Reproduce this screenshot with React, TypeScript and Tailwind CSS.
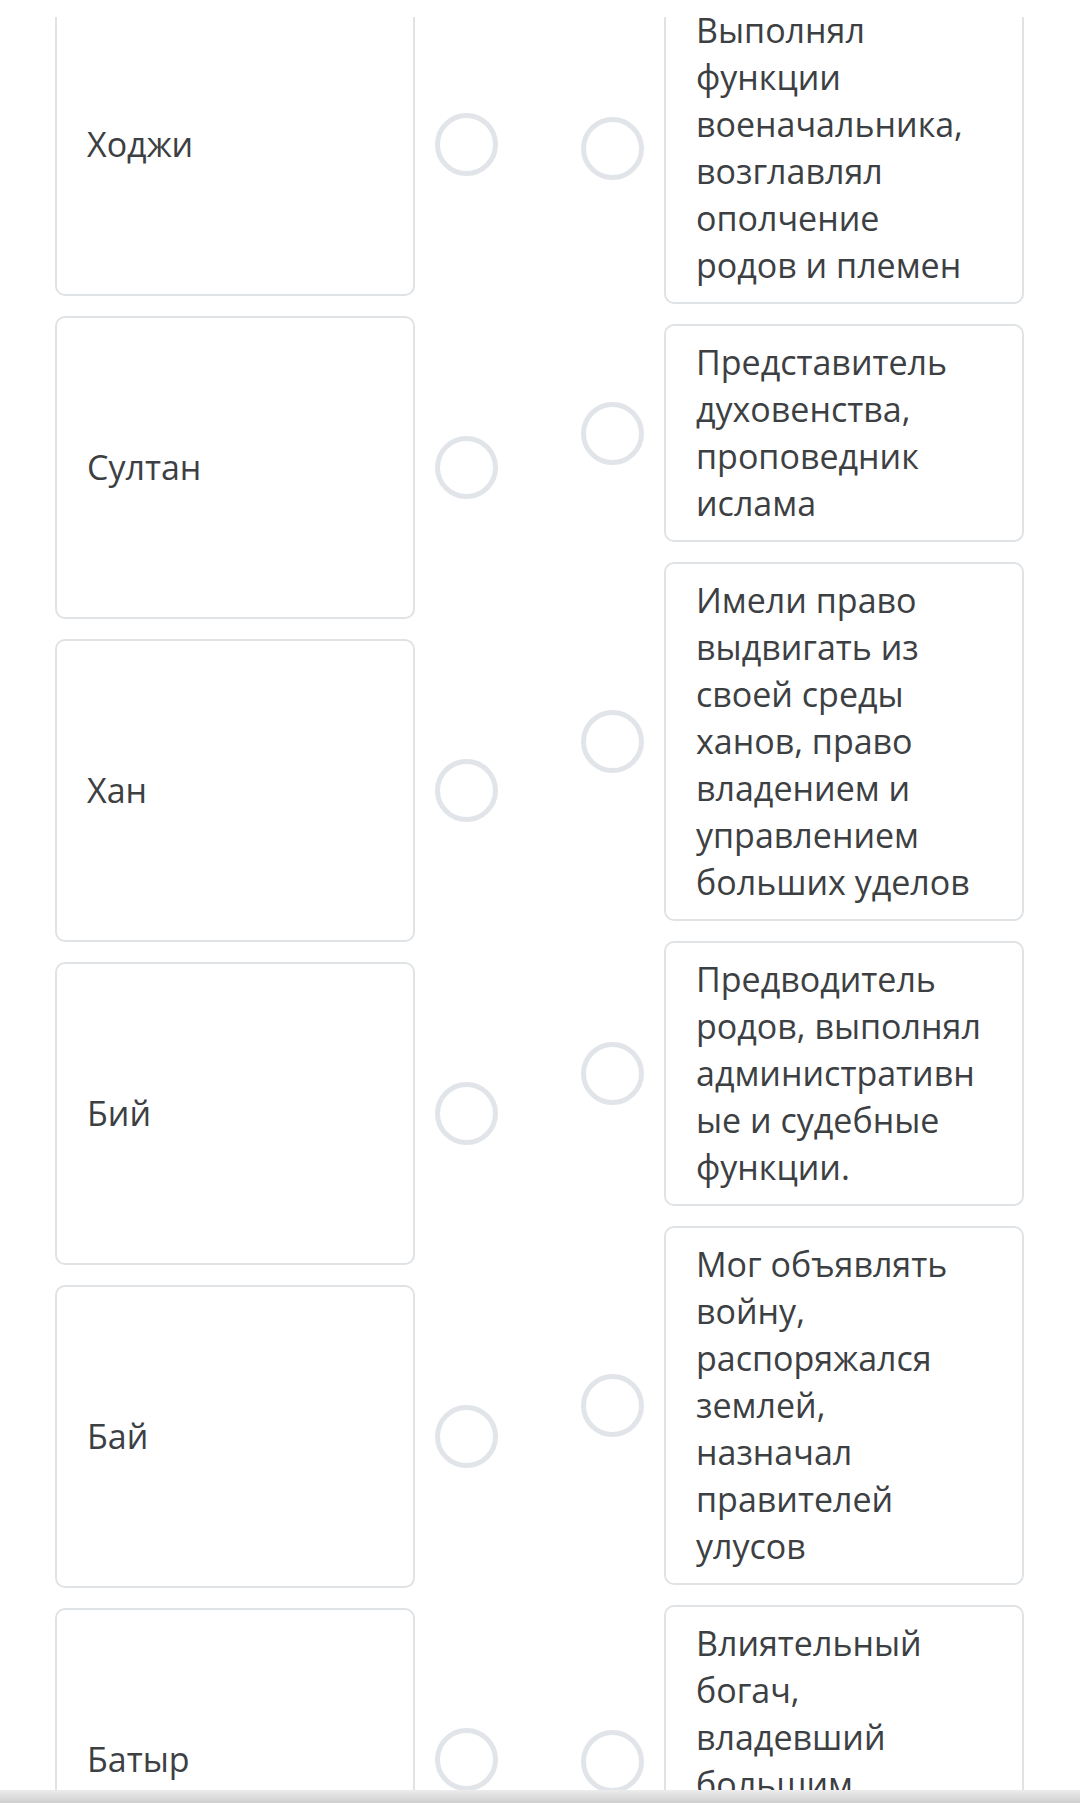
import React from 'react';

const leftItems = ['Ходжи', 'Султан', 'Хан', 'Бий', 'Бай', 'Батыр'];

const rightItems = [
  'Выполнял функции военачальника, возглавлял ополчение родов и племен',
  'Представитель духовенства, проповедник ислама',
  'Имели право выдвигать из своей среды ханов, право владением и управлением больших уделов',
  'Предводитель родов, выполнял административные и судебные функции.',
  'Мог объявлять войну, распоряжался землей, назначал правителей улусов',
  'Влиятельный богач, владевший большим\nскотом и пастбищами',
];

const Circle = () => (
  <div className="w-[63px] h-[63px] shrink-0 rounded-full border-[5px] border-[#e1e4e8] bg-white" />
);

const App = () => {
  return (
    <div
      className="w-[1080px] h-[1803px] flex flex-col bg-white overflow-hidden text-[#3c4043]"
      style={{ fontFamily: '"Open Sans", "Noto Sans", sans-serif' }}
    >
      <div className="h-[17px] shrink-0 bg-white" />
      <div className="flex-1 overflow-hidden">
        <div className="-mt-[24px] flex items-start pl-[55px] pr-[56px] gap-[83px]">
          {/* left column */}
          <div className="flex flex-col gap-[20px]">
            {leftItems.map((item) => (
              <div key={item} className="flex items-center gap-[20px]">
                <div className="w-[360px] h-[303px] rounded-[10px] border-2 border-[#e0e3e6] flex items-center pl-[30px] pr-4 text-[34px] leading-[47px]">
                  {item}
                </div>
                <Circle />
              </div>
            ))}
          </div>
          {/* right column */}
          <div className="-mt-px flex flex-col gap-[20px]">
            {rightItems.map((item) => (
              <div key={item} className="flex items-center gap-[20px]">
                <Circle />
                <div className="w-[360px] rounded-[10px] border-2 border-[#e0e3e6] pl-[30px] pr-[37px] py-[13px] text-[34px] leading-[47px] break-words whitespace-pre-line">
                  {item}
                </div>
              </div>
            ))}
          </div>
        </div>
      </div>
      <div className="h-[13px] shrink-0 bg-gradient-to-b from-[#ececec] to-[#cfcfcf]" />
    </div>
  );
};

export default App;
